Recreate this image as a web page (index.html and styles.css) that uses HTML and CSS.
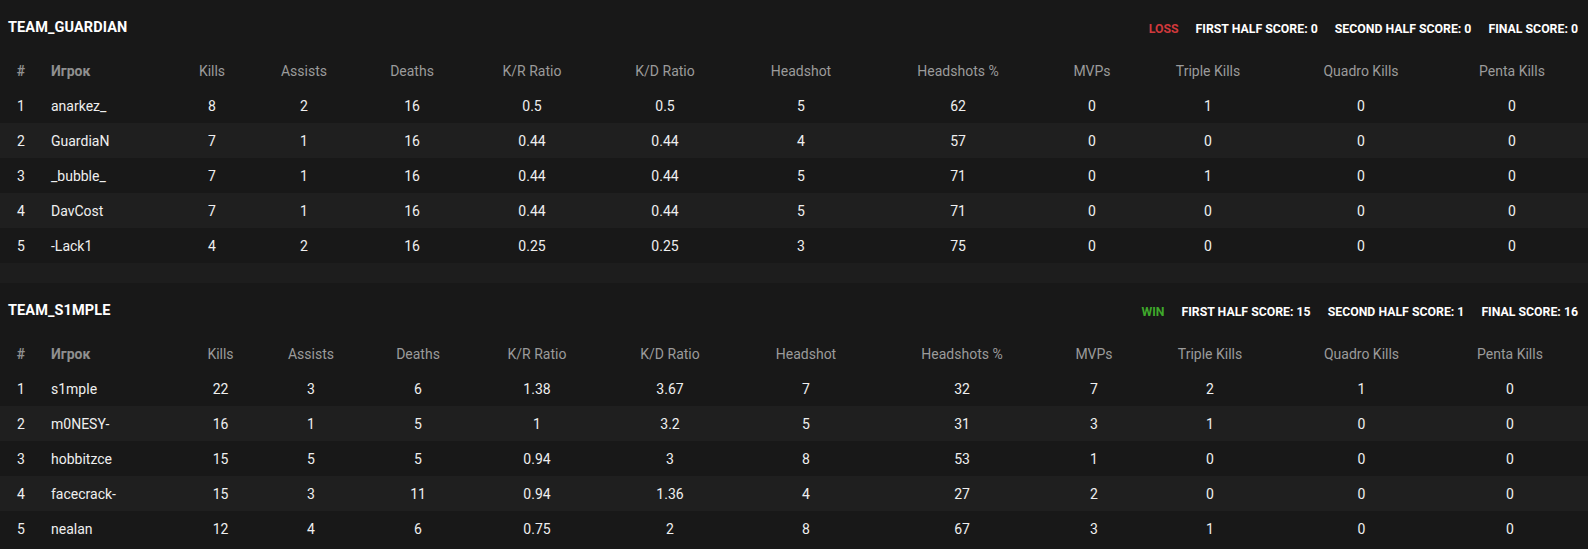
FILE: index.html
```html
<!DOCTYPE html>
<html lang="ru">
<head>
<meta charset="utf-8">
<title>Match stats</title>
<link rel="stylesheet" href="styles.css">
</head>
<body>
<div class="match">
  <section class="team">
    <header class="team-head">
      <h2 class="team-name">TEAM_GUARDIAN</h2>
      <div class="scores">
        <span class="result loss">LOSS</span>
        <span class="score">FIRST HALF SCORE: 0</span>
        <span class="score">SECOND HALF SCORE: 0</span>
        <span class="score">FINAL SCORE: 0</span>
      </div>
    </header>
    <table class="stats stats-a">
      <colgroup>
        <col><col><col><col><col><col><col><col><col><col><col><col><col>
      </colgroup>
      <thead>
        <tr><th class="num">#</th><th class="player">Игрок</th><th>Kills</th><th>Assists</th><th>Deaths</th><th>K/R Ratio</th><th>K/D Ratio</th><th>Headshot</th><th>Headshots %</th><th>MVPs</th><th>Triple Kills</th><th>Quadro Kills</th><th>Penta Kills</th></tr>
      </thead>
      <tbody>
        <tr><td class="num">1</td><td class="player">anarkez_</td><td>8</td><td>2</td><td>16</td><td>0.5</td><td>0.5</td><td>5</td><td>62</td><td>0</td><td>1</td><td>0</td><td>0</td></tr>
        <tr><td class="num">2</td><td class="player">GuardiaN</td><td>7</td><td>1</td><td>16</td><td>0.44</td><td>0.44</td><td>4</td><td>57</td><td>0</td><td>0</td><td>0</td><td>0</td></tr>
        <tr><td class="num">3</td><td class="player">_bubble_</td><td>7</td><td>1</td><td>16</td><td>0.44</td><td>0.44</td><td>5</td><td>71</td><td>0</td><td>1</td><td>0</td><td>0</td></tr>
        <tr><td class="num">4</td><td class="player">DavCost</td><td>7</td><td>1</td><td>16</td><td>0.44</td><td>0.44</td><td>5</td><td>71</td><td>0</td><td>0</td><td>0</td><td>0</td></tr>
        <tr><td class="num">5</td><td class="player">-Lack1</td><td>4</td><td>2</td><td>16</td><td>0.25</td><td>0.25</td><td>3</td><td>75</td><td>0</td><td>0</td><td>0</td><td>0</td></tr>
      </tbody>
    </table>
  </section>

  <div class="divider"></div>

  <section class="team">
    <header class="team-head">
      <h2 class="team-name">TEAM_S1MPLE</h2>
      <div class="scores">
        <span class="result win">WIN</span>
        <span class="score">FIRST HALF SCORE: 15</span>
        <span class="score">SECOND HALF SCORE: 1</span>
        <span class="score">FINAL SCORE: 16</span>
      </div>
    </header>
    <table class="stats stats-b">
      <colgroup>
        <col><col><col><col><col><col><col><col><col><col><col><col><col>
      </colgroup>
      <thead>
        <tr><th class="num">#</th><th class="player">Игрок</th><th>Kills</th><th>Assists</th><th>Deaths</th><th>K/R Ratio</th><th>K/D Ratio</th><th>Headshot</th><th>Headshots %</th><th>MVPs</th><th>Triple Kills</th><th>Quadro Kills</th><th>Penta Kills</th></tr>
      </thead>
      <tbody>
        <tr><td class="num">1</td><td class="player">s1mple</td><td>22</td><td>3</td><td>6</td><td>1.38</td><td>3.67</td><td>7</td><td>32</td><td>7</td><td>2</td><td>1</td><td>0</td></tr>
        <tr><td class="num">2</td><td class="player">m0NESY-</td><td>16</td><td>1</td><td>5</td><td>1</td><td>3.2</td><td>5</td><td>31</td><td>3</td><td>1</td><td>0</td><td>0</td></tr>
        <tr><td class="num">3</td><td class="player">hobbitzce</td><td>15</td><td>5</td><td>5</td><td>0.94</td><td>3</td><td>8</td><td>53</td><td>1</td><td>0</td><td>0</td><td>0</td></tr>
        <tr><td class="num">4</td><td class="player">facecrack-</td><td>15</td><td>3</td><td>11</td><td>0.94</td><td>1.36</td><td>4</td><td>27</td><td>2</td><td>0</td><td>0</td><td>0</td></tr>
        <tr><td class="num">5</td><td class="player">nealan</td><td>12</td><td>4</td><td>6</td><td>0.75</td><td>2</td><td>8</td><td>67</td><td>3</td><td>1</td><td>0</td><td>0</td></tr>
      </tbody>
    </table>
  </section>
</div>
</body>
</html>
```

FILE: styles.css
```css
* { box-sizing: border-box; }

html, body {
  margin: 0;
  padding: 0;
  background: #181818;
}

body {
  font-family: Roboto, "Noto Sans", "Liberation Sans", sans-serif;
  color: #efefef;
  font-size: 14px;
}

.match {
  display: flex;
  flex-direction: column;
  width: 1588px;
}

.team {
  display: flex;
  flex-direction: column;
}

.team-head {
  height: 53px;
  display: flex;
  align-items: center;
  justify-content: space-between;
  padding: 1px 10px 0 8px;
}

.team-name {
  margin: 0;
  font-size: 14.5px;
  font-weight: 700;
  color: #ffffff;
  letter-spacing: 0.1px;
}

.scores {
  display: flex;
  align-items: center;
  gap: 17px;
  font-size: 12.3px;
  font-weight: 700;
  padding-top: 3px;
}

.score { color: #ffffff; }
.result.loss { color: #d0393c; }
.result.win { color: #3fa82b; }

.divider {
  height: 20px;
  background: #1d1d1d;
}

.stats {
  width: 1588px;
  border-collapse: collapse;
  table-layout: fixed;
}

.stats th,
.stats td {
  height: 35px;
  padding: 0;
  text-align: center;
  vertical-align: middle;
  white-space: nowrap;
}

.stats th {
  font-weight: 400;
  color: #9b9b9b;
}

.stats th.num,
.stats th.player {
  font-weight: 700;
  color: #8f8f8f;
}

.stats .player {
  text-align: left;
  padding-left: 9px;
}

.stats tbody tr:nth-child(even) {
  background: #1f1f1f;
}

/* column widths — first team table */
.stats-a col:nth-child(1)  { width: 42px; }
.stats-a col:nth-child(2)  { width: 124px; }
.stats-a col:nth-child(3)  { width: 92px; }
.stats-a col:nth-child(4)  { width: 92px; }
.stats-a col:nth-child(5)  { width: 124px; }
.stats-a col:nth-child(6)  { width: 116px; }
.stats-a col:nth-child(7)  { width: 150px; }
.stats-a col:nth-child(8)  { width: 122px; }
.stats-a col:nth-child(9)  { width: 192px; }
.stats-a col:nth-child(10) { width: 76px; }
.stats-a col:nth-child(11) { width: 156px; }
.stats-a col:nth-child(12) { width: 150px; }
.stats-a col:nth-child(13) { width: 152px; }

/* column widths — second team table */
.stats-b col:nth-child(1)  { width: 42px; }
.stats-b col:nth-child(2)  { width: 132px; }
.stats-b col:nth-child(3)  { width: 93px; }
.stats-b col:nth-child(4)  { width: 88px; }
.stats-b col:nth-child(5)  { width: 126px; }
.stats-b col:nth-child(6)  { width: 112px; }
.stats-b col:nth-child(7)  { width: 154px; }
.stats-b col:nth-child(8)  { width: 118px; }
.stats-b col:nth-child(9)  { width: 194px; }
.stats-b col:nth-child(10) { width: 70px; }
.stats-b col:nth-child(11) { width: 162px; }
.stats-b col:nth-child(12) { width: 141px; }
.stats-b col:nth-child(13) { width: 156px; }
```
